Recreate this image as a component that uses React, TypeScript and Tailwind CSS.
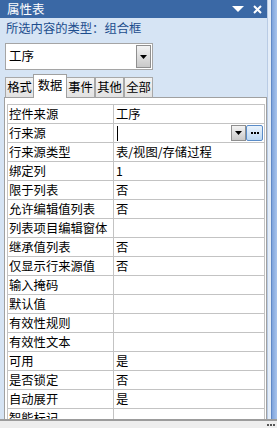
const rows: [string, string][] = [
    ["控件来源", "工序"],
    ["行来源", ""],
    ["行来源类型", "表/视图/存储过程"],
    ["绑定列", "1"],
    ["限于列表", "否"],
    ["允许编辑值列表", "否"],
    ["列表项目编辑窗体", ""],
    ["继承值列表", "否"],
    ["仅显示行来源值", "否"],
    ["输入掩码", ""],
    ["默认值", ""],
    ["有效性规则", ""],
    ["有效性文本", ""],
    ["可用", "是"],
    ["是否锁定", "否"],
    ["自动展开", "是"],
    ["智能标记", ""],
];

const tabs = ["格式", "数据", "事件", "其他", "全部"];

const DownArrow = () => (
    <svg width="7" height="4" viewBox="0 0 7 4">
        <path d="M0 0H7L3.5 4Z" fill="#000" />
    </svg>
);

const App = () => {
    return (
        <div className="w-[277px] h-[428px] flex flex-col overflow-hidden font-['Noto_Sans_CJK_SC',sans-serif] text-[12.3px] leading-none">
            <div className="flex flex-1 min-h-0">
                <div className="w-[267px] flex flex-col bg-[#d6e4f4]">
                    {/* title */}
                    <div className="h-[18px] shrink-0 bg-[#3a68a5] flex items-center pl-[7px] pr-[4px] text-white text-[12.5px]">
                        <span className="flex-1">属性表</span>
                        <svg width="12" height="6" viewBox="0 0 12 6" className="mr-[9px]">
                            <path d="M0 0H12L6 6Z" fill="#fff" />
                        </svg>
                        <svg width="9" height="9" viewBox="0 0 9 9" className="mr-[1px]">
                            <path d="M1 1L8 8M8 1L1 8" stroke="#fff" strokeWidth="2" />
                        </svg>
                    </div>
                    <div className="h-[20px] shrink-0 flex items-center pl-[6px] text-[#1c4d8d]">
                        所选内容的类型：组合框
                    </div>
                    {/* combo */}
                    <div className="mt-[5px] ml-[5px] w-[148px] h-[27px] shrink-0 bg-white border border-[#a5a5a5] flex items-center pl-[3px] pr-[1px]">
                        <span className="flex-1 text-[12.5px]">工序</span>
                        <div className="w-[15px] h-[23px] border border-[#8f8f8f] bg-gradient-to-b from-[#f4f4f4] to-[#c9c9c9] flex items-center justify-center">
                            <DownArrow />
                        </div>
                    </div>
                    {/* tabs */}
                    <div className="mt-[4px] ml-[5px] h-[24px] shrink-0 flex items-end -mb-px relative z-10">
                        {tabs.map((t, i) =>
                            i === 1 ? (
                                <div
                                    key={t}
                                    className="w-[34px] h-[24px] bg-white border border-b-0 border-[#a0a0a0] flex items-center justify-center pb-[2px] -mx-px relative z-10">
                                    {t}
                                </div>
                            ) : (
                                <div
                                    key={t}
                                    className="w-[29px] h-[21px] bg-gradient-to-b from-[#f3f3f3] to-[#e2e2e2] border border-b-[#a0a0a0] border-[#a8a8a8] flex items-center justify-center">
                                    {t}
                                </div>
                            )
                        )}
                    </div>
                    {/* grid */}
                    <div className="flex-1 min-h-0 ml-[4px] w-[263px] bg-white border border-b-0 border-[#a0a0a0] pt-[6px] pl-[2px] pr-[1px] overflow-hidden">
                        <div className="border-t border-l border-r border-[#c3c3c3]">
                            {rows.map(([label, value]) => (
                                <div key={label} className="h-[19px] flex border-b border-[#c3c3c3]">
                                    <div className="w-[106px] shrink-0 border-r border-[#c3c3c3] pl-[1px] flex items-center whitespace-nowrap">
                                        {label}
                                    </div>
                                    {label === "行来源" ? (
                                        <div className="flex-1 flex items-center pl-[3px] pr-[1px]">
                                            <div className="w-px h-[15px] bg-black" />
                                            <div className="flex-1" />
                                            <div className="w-[15px] h-[16px] border border-[#8f8f8f] bg-gradient-to-b from-[#f4f4f4] to-[#c9c9c9] flex items-center justify-center">
                                                <DownArrow />
                                            </div>
                                            <div className="w-[17px] h-[16px] border border-[#5a8cc8] rounded-[2px] bg-gradient-to-b from-[#eaf3fc] to-[#bcd8f3] flex items-center justify-center gap-[1px]">
                                                <span className="w-[2px] h-[2px] bg-black" />
                                                <span className="w-[2px] h-[2px] bg-black" />
                                                <span className="w-[2px] h-[2px] bg-black" />
                                            </div>
                                        </div>
                                    ) : (
                                        <div className="flex-1 flex items-center pl-[2px]">{value}</div>
                                    )}
                                </div>
                            ))}
                        </div>
                    </div>
                </div>
                {/* right edge */}
                <div className="w-[10px] flex">
                    <div className="w-[1px] bg-[#b9cbe4]" />
                    <div className="w-[3px] bg-[#e4edf8]" />
                    <div className="w-[1px] bg-[#5f88c6]" />
                    <div className="flex-1 bg-gradient-to-r from-[#7fa4dc] to-[#a9c4ec]" />
                </div>
            </div>
            {/* status bar */}
            <div className="h-[9px] shrink-0 border-t-2 border-[#9c9c9c] bg-[#eeeeee] flex items-center justify-end pr-[2px] gap-[1px]">
                <span className="w-[2px] h-[2px] bg-[#555]" />
                <span className="w-[2px] h-[2px] bg-[#555]" />
                <span className="w-[2px] h-[2px] bg-[#555]" />
            </div>
        </div>
    );
};

export default App;
